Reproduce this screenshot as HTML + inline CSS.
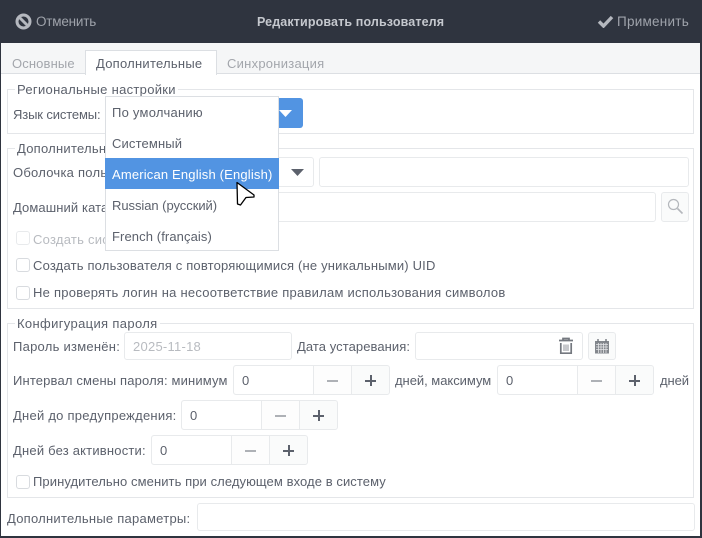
<!DOCTYPE html>
<html><head><meta charset="utf-8">
<style>
html,body{margin:0;padding:0;width:702px;height:538px;overflow:hidden;background:#2f343f}
body{position:relative;font-family:"Liberation Sans","Noto Sans CJK SC",sans-serif;font-size:13px;color:#5c616c}
div,span.t{position:absolute;box-sizing:border-box}
.t{white-space:nowrap;line-height:18px;height:18px;letter-spacing:.25px}
.g{border:1px solid #e4e6e9;background:#fff}
.in{background:#fff;border:1px solid #e8eaec;border-radius:3px}
.btn{background:#fafbfb;border:1px solid #e8eaec;border-radius:3px}
.cb{width:14px;height:14px;border:1px solid #d8dbdf;border-radius:3px;background:#fff}
.leg{background:#fff;padding:0 2px}
.sp{background:#fafbfb;border:1px solid #e8eaec;border-radius:3px;height:30px}
.sp i{position:absolute;top:0;bottom:0;width:1px;background:#e8eaec}
.sp .v{position:absolute;top:0;bottom:0;left:0;width:79px;background:#fff;border-radius:3px 0 0 3px}
.sp .m{position:absolute;top:0;bottom:0;left:80px;width:37px;background:#fdfdfd}
.sp b{position:absolute;background:#5c616c}
.dis{color:#b8bbc0}
</style></head><body>
<div style="left:1px;top:43px;width:699px;height:493px;background:#fff"></div>
<div style="left:1px;top:43px;width:699px;height:31px;background:#f5f6f7;border-bottom:1px solid #dcdfe3"></div>

<svg style="position:absolute;left:15px;top:13px" width="17" height="17" viewBox="0 0 17 17"><circle cx="8.5" cy="8.5" r="6.5" fill="none" stroke="#b5b8bf" stroke-width="3"/><path d="M4 4L13 13" stroke="#b5b8bf" stroke-width="3"/></svg>
<span class="t" style="left:36px;top:13px;color:#9fa3ab;font-size:13.5px;letter-spacing:-.2px">Отменить</span>
<span class="t" style="left:257px;top:13px;color:#c5c8ce;font-weight:bold;font-size:12.5px;letter-spacing:.13px">Редактировать пользователя</span>
<svg style="position:absolute;left:597px;top:14px" width="17" height="14" viewBox="0 0 17 14"><path d="M2 7.5L6.5 12L15 3" fill="none" stroke="#b5b8bf" stroke-width="3.4"/></svg>
<span class="t" style="left:617px;top:13px;color:#9fa3ab;font-size:13.5px">Применить</span>

<div style="left:85px;top:50px;width:132px;height:25px;background:#fff;border:1px solid #dcdfe3;border-bottom:0"></div>
<span class="t" style="left:12px;top:55px;color:#a3a6ac;letter-spacing:.13px">Основные</span>
<span class="t" style="left:96px;top:55px;color:#5c616c">Дополнительные</span>
<span class="t" style="left:227px;top:55px;color:#a3a6ac">Синхронизация</span>

<!-- group 1 -->
<div class="g" style="left:7px;top:89px;width:687px;height:45px"></div>
<span class="t leg" style="left:15px;top:81px;letter-spacing:.3px">Региональные настройки</span>
<span class="t" style="left:13px;top:106px;letter-spacing:-.13px">Язык системы:</span>
<div style="left:270px;top:98px;width:33px;height:30px;background:#5294e2;border-radius:3px"></div>
<svg style="position:absolute;left:279px;top:110px" width="13" height="7"><path d="M0 0H13L6.5 7Z" fill="#fff"/></svg>

<!-- group 2 -->
<div class="g" style="left:7px;top:148px;width:687px;height:161px"></div>
<span class="t leg" style="left:15px;top:140px">Дополнительные</span>
<span class="t" style="left:13px;top:164px">Оболочка пользователя:</span>
<div class="btn" style="left:200px;top:157px;width:114px;height:30px;background:#fff"></div>
<svg style="position:absolute;left:291px;top:169px" width="13" height="7"><path d="M0 0H13L6.5 7Z" fill="#5c616c"/></svg>
<div class="in" style="left:319px;top:157px;width:370px;height:30px"></div>
<span class="t" style="left:13px;top:199px;letter-spacing:.1px">Домашний каталог:</span>
<div class="in" style="left:200px;top:192px;width:456px;height:30px"></div>
<div class="btn" style="left:661px;top:192px;width:28px;height:30px"></div>
<svg style="position:absolute;left:667px;top:198px" width="17" height="17" viewBox="0 0 17 17"><circle cx="6.5" cy="6.5" r="5" fill="none" stroke="#b4b7bc" stroke-width="1.2"/><path d="M10.5 10.5L15.5 15.5" stroke="#b4b7bc" stroke-width="1.6"/></svg>
<div class="cb" style="left:16px;top:231px;border-color:#e8eaec"></div>
<span class="t dis" style="left:33px;top:231px">Создать системного пользователя</span>
<div class="cb" style="left:16px;top:258px"></div>
<span class="t" style="left:33px;top:257px;letter-spacing:.18px">Создать пользователя с повторяющимися (не уникальными) UID</span>
<div class="cb" style="left:16px;top:286px"></div>
<span class="t" style="left:33px;top:284px">Не проверять логин на несоответствие правилам использования символов</span>

<!-- group 3 -->
<div class="g" style="left:7px;top:323px;width:687px;height:175px"></div>
<span class="t leg" style="left:15px;top:315px;letter-spacing:.35px">Конфигурация пароля</span>
<span class="t" style="left:13px;top:338px">Пароль изменён:</span>
<div class="in" style="left:124px;top:332px;width:168px;height:28px"></div>
<span class="t dis" style="left:133px;top:338px">2025-11-18</span>
<span class="t" style="left:297px;top:338px;letter-spacing:.07px">Дата устаревания:</span>
<div class="in" style="left:415px;top:332px;width:168px;height:28px"></div>
<svg style="position:absolute;left:558px;top:337px" width="16" height="18" viewBox="0 0 16 18"><path d="M1 3.500H15M5 3V1.500H11V3" fill="none" stroke="#74787f" stroke-width="1.700"/><path d="M2.800 6V16.200H13.200V6" fill="none" stroke="#74787f" stroke-width="1.700"/><path d="M6 7.500V14M8 7.500V14M10 7.500V14" stroke="#74787f" stroke-width=".8"/></svg>
<div class="btn" style="left:588px;top:332px;width:28px;height:28px"></div>
<svg style="position:absolute;left:595px;top:339px" width="14" height="15" viewBox="0 0 14 15"><rect x="0" y="2" width="14" height="12.500" fill="#83878d"/><path d="M1 5.500H13M1 8H13M1 10.500H13M3.500 4V14M6 4V14M8.500 4V14M11 4V14" stroke="#e4e5e7" stroke-width=".8"/><path d="M3 0V3M11 0V3" stroke="#74787f" stroke-width="1.400"/></svg>

<span class="t" style="left:13px;top:372px;letter-spacing:.15px">Интервал смены пароля: минимум</span>
<div class="sp" style="left:233px;top:365px;width:157px"><div class="v"></div><div class="m"></div><i style="left:79px"></i><i style="left:117px"></i><b style="left:93px;top:14px;width:11px;height:1.500px;background:#aeb1b6"></b><b style="left:131px;top:14px;width:11px;height:2px"></b><b style="left:135.500px;top:9px;width:2px;height:11px"></b></div>
<span class="t" style="left:242px;top:372px">0</span>
<span class="t" style="left:395px;top:372px;letter-spacing:-.03px">дней, максимум</span>
<div class="sp" style="left:497px;top:365px;width:157px"><div class="v"></div><div class="m"></div><i style="left:79px"></i><i style="left:117px"></i><b style="left:93px;top:14px;width:11px;height:1.500px;background:#aeb1b6"></b><b style="left:131px;top:14px;width:11px;height:2px"></b><b style="left:135.500px;top:9px;width:2px;height:11px"></b></div>
<span class="t" style="left:506px;top:372px">0</span>
<span class="t" style="left:660px;top:372px;letter-spacing:-.1px">дней</span>

<span class="t" style="left:13px;top:407px">Дней до предупреждения:</span>
<div class="sp" style="left:181px;top:400px;width:157px"><div class="v"></div><div class="m"></div><i style="left:79px"></i><i style="left:117px"></i><b style="left:93px;top:14px;width:11px;height:1.500px;background:#aeb1b6"></b><b style="left:131px;top:14px;width:11px;height:2px"></b><b style="left:135.500px;top:9px;width:2px;height:11px"></b></div>
<span class="t" style="left:190px;top:407px">0</span>

<span class="t" style="left:13px;top:442px;letter-spacing:.2px">Дней без активности:</span>
<div class="sp" style="left:151px;top:435px;width:157px"><div class="v"></div><div class="m"></div><i style="left:79px"></i><i style="left:117px"></i><b style="left:93px;top:14px;width:11px;height:1.500px;background:#aeb1b6"></b><b style="left:131px;top:14px;width:11px;height:2px"></b><b style="left:135.500px;top:9px;width:2px;height:11px"></b></div>
<span class="t" style="left:160px;top:442px">0</span>

<div class="cb" style="left:16px;top:475px"></div>
<span class="t" style="left:33px;top:473px;letter-spacing:.08px">Принудительно сменить при следующем входе в систему</span>

<span class="t" style="left:7px;top:510px">Дополнительные параметры:</span>
<div class="in" style="left:197px;top:503px;width:498px;height:28px"></div>

<!-- popup -->
<div style="left:105px;top:96px;width:174px;height:155px;background:#fff;border:1px solid #dcdfe3"></div>
<div style="left:105px;top:158px;width:174px;height:31px;background:#5294e2"></div>
<span class="t" style="left:112px;top:104px">По умолчанию</span>
<span class="t" style="left:112px;top:135px;letter-spacing:.14px">Системный</span>
<span class="t" style="left:112px;top:166px;color:#fff;letter-spacing:.17px">American English (English)</span>
<span class="t" style="left:112px;top:197px;letter-spacing:-.05px">Russian (русский)</span>
<span class="t" style="left:112px;top:228px;letter-spacing:.1px">French (français)</span>
<svg style="position:absolute;left:235px;top:181px" width="21" height="26" viewBox="0 0 21 26"><path d="M2 1.500L19 14V16L11 16.500L5.500 24L2.500 23Z" fill="#fff" stroke="#000" stroke-width="1.300" stroke-linejoin="round"/></svg>
</body></html>
